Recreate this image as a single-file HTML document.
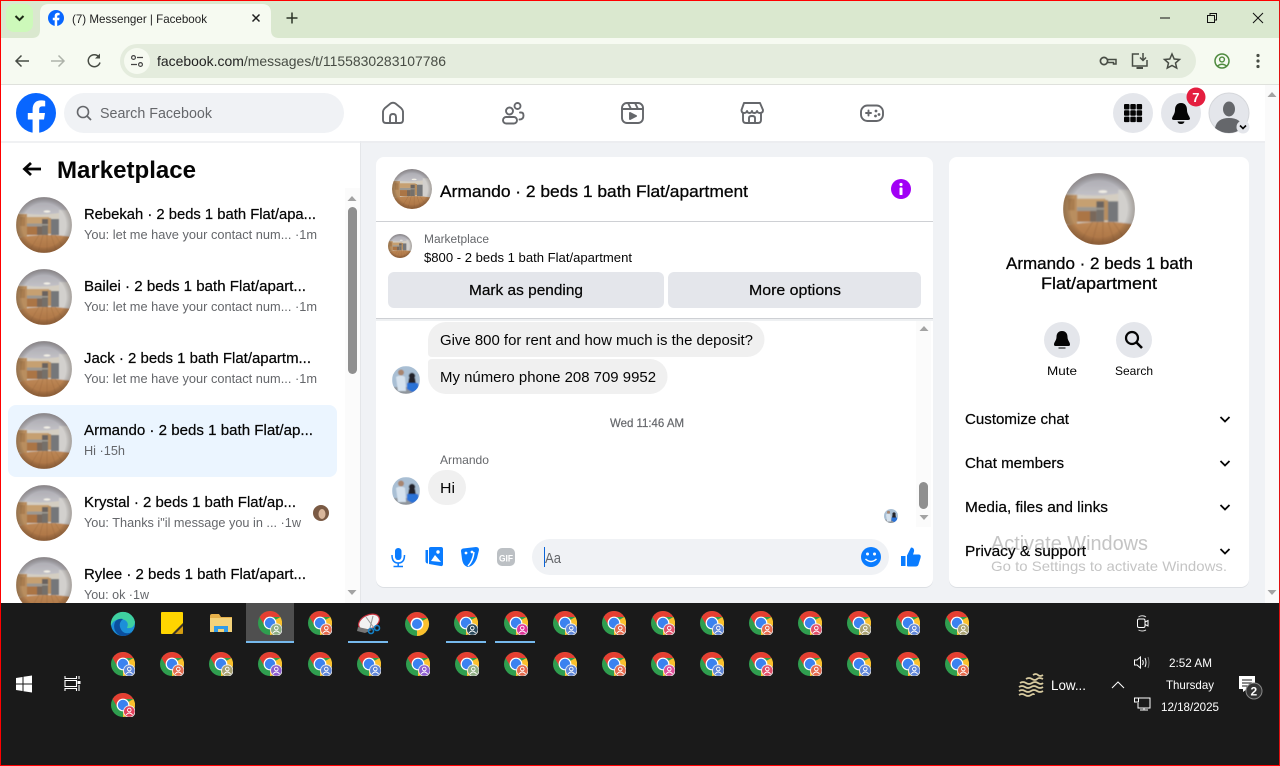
<!DOCTYPE html>
<html lang="en"><head><meta charset="utf-8"><title>(7) Messenger | Facebook</title>
<style>
html,body{margin:0;padding:0;background:#f0f2f5;overflow:hidden}
svg{display:block}
text{font-family:"Liberation Sans",sans-serif;white-space:pre}
.t{font-size:15px;fill:#050505;stroke:#050505;stroke-width:.22}
.s{font-size:13px;fill:#65676b}
.n{font-size:15px;fill:#050505}
.w{fill:#fff;font-size:12px}
</style></head><body>
<svg xmlns="http://www.w3.org/2000/svg" width="1280" height="766" viewBox="0 0 1280 766">
<defs>
<clipPath id="rc"><circle cx="28" cy="28" r="28"/></clipPath>
<clipPath id="pc"><circle cx="14" cy="14" r="14"/></clipPath>
<filter id="bl" x="-5%" y="-5%" width="110%" height="110%"><feGaussianBlur stdDeviation=".55"/></filter>
<filter id="bp" x="-5%" y="-5%" width="110%" height="110%"><feGaussianBlur stdDeviation=".5"/></filter>
<radialGradient id="vg" cx=".5" cy=".5" r=".5"><stop offset=".78" stop-color="#000" stop-opacity="0"/><stop offset="1" stop-color="#3a2a20" stop-opacity=".28"/></radialGradient>
<linearGradient id="ce" x1="0" y1="0" x2="0" y2="1"><stop offset="0" stop-color="#a6a5ac"/><stop offset=".35" stop-color="#c6c5ca"/></linearGradient>
<linearGradient id="fl" x1="0" y1="0" x2="0" y2="1"><stop offset="0" stop-color="#bd8856"/><stop offset="1" stop-color="#a86f40"/></linearGradient>
<symbol id="room" viewBox="0 0 56 56">
<g clip-path="url(#rc)"><g filter="url(#bl)">
<rect width="56" height="56" fill="url(#ce)"/>
<path d="M0 15 Q28 21 56 13 V40 H0Z" fill="#d4cec2"/>
<ellipse cx="31" cy="14.500" rx="3.500" ry="1.100" fill="#f2efe6"/>
<rect x="0" y="17" width="11" height="23" fill="#b98e5f"/>
<rect x="4" y="20" width="5" height="9" fill="#a97d50"/>
<rect x="11" y="20" width="22" height="6.500" fill="#c6a071"/>
<rect x="11" y="26.500" width="26" height="3" fill="#9c9890"/>
<rect x="11" y="29.500" width="10" height="8.500" fill="#ab7444"/>
<rect x="21" y="29.500" width="5" height="8.500" fill="#79685a"/>
<rect x="26" y="22" width="6" height="5" fill="#6a645f"/>
<rect x="26" y="28.500" width="6" height="9.500" fill="#75706b"/>
<rect x="32" y="21" width="3" height="16" fill="#b78f61"/>
<rect x="35" y="22" width="8" height="16" fill="#75777a"/>
<rect x="43" y="13" width="13" height="27" fill="#d2d0cd"/>
<path d="M0 41 Q28 35.500 56 40 V56 H0Z" fill="url(#fl)"/>
<path d="M12 56 L23 38M22 56 L27 38M31 56 L31 38M41 56 L35 38M51 56 L39 38" stroke="#93623a" stroke-width=".5" opacity=".7"/>
</g>
<circle cx="28" cy="28" r="28" fill="url(#vg)"/>
</g></symbol>
<symbol id="per" viewBox="0 0 28 28">
<g clip-path="url(#pc)"><g filter="url(#bp)">
<rect width="28" height="28" fill="#a9bfd4"/>
<rect y="21" width="28" height="7" fill="#8f959c"/>
<circle cx="9" cy="6.500" r="3" fill="#a88670"/>
<path d="M4 11 Q9 8 13 11 L14 25 H6Z" fill="#d5e2ee"/>
<circle cx="20" cy="10" r="3.200" fill="#22222a"/>
<path d="M17 12 H23 L24 18 H16Z" fill="#22222a"/>
<path d="M15 17 H26 L27 24 L20 26 L15 23Z" fill="#2a72d6"/>
</g></g></symbol>
<symbol id="c" viewBox="0 0 24 24">
<circle cx="12" cy="12" r="12" fill="#2f9e4f"/>
<path d="M12 12 L22.4 6 A12 12 0 0 1 12 24Z" fill="#fbc02d"/>
<path d="M1.6 6 A12 12 0 0 1 22.4 6 H12 L6.8 15Z" fill="#e53f32"/>
<circle cx="12" cy="12" r="6.400" fill="#fff"/>
<circle cx="12" cy="12" r="5.200" fill="#3b82f0"/>
<circle cx="18.300" cy="18.500" r="6.200" fill="#f2f2f2" opacity=".9"/>
<circle cx="18.300" cy="18.500" r="5.300" fill="currentColor"/>
<circle cx="18.300" cy="17" r="1.800" fill="none" stroke="#fff" stroke-width=".9"/>
<path d="M15 22 Q18.300 18 21.600 22" fill="none" stroke="#fff" stroke-width=".9"/>
</symbol>
</defs>

<!-- browser chrome -->
<rect width="1280" height="38" fill="#dae8cf"/>
<rect y="38" width="1280" height="46" fill="#f6faf1"/>
<rect y="84" width="1280" height="1" fill="#dfe1dc"/>
<rect x="6" y="4" width="27" height="28" rx="8" fill="#cdf9ba"/>
<path d="M15.500 16 L19.500 20 L23.500 16" fill="none" stroke="#1c2b16" stroke-width="2"/>
<path d="M32 38 Q40 38 40 30 V13 Q40 4 49 4 H262 Q271 4 271 13 V30 Q271 38 279 38Z" fill="#f6faf1"/>
<circle cx="56" cy="18" r="8" fill="#0866ff"/>
<path d="M54.700 26 V20.300 H52.800 V17.800 H54.700 V16.300 C54.700 13.800 56 12.800 58 12.800 L59.600 13 V15.200 H58.500 C57.500 15.200 57.200 15.700 57.200 16.600 V17.800 H59.500 L59.100 20.300 H57.200 V26Z" fill="#fff"/>
<text x="72" y="23" font-size="12" fill="#1f1f1f" textLength="135" lengthAdjust="spacingAndGlyphs">(7) Messenger | Facebook</text>
<path d="M252.500 14.500 L259.500 21.500 M259.500 14.500 L252.500 21.500" stroke="#1f1f1f" stroke-width="1.500"/>
<path d="M292 12.500 V23.500 M286.500 18 H297.500" stroke="#2a3326" stroke-width="1.500"/>
<path d="M1160 18 H1170" stroke="#111" stroke-width="1"/>
<path d="M1207.500 15.500 H1214.500 V22.500 H1207.500Z M1210 15.500 V13.500 H1216.500 V20 H1214.500" fill="none" stroke="#111" stroke-width="1"/>
<path d="M1253 13 L1263 23 M1263 13 L1253 23" stroke="#111" stroke-width="1"/>
<!-- toolbar -->
<path d="M29 61 H16.500 M21.500 55.500 L16 61 L21.500 66.500" fill="none" stroke="#474c44" stroke-width="1.500"/>
<path d="M51 61 H63.500 M58.500 55.500 L64 61 L58.500 66.500" fill="none" stroke="#aeb3aa" stroke-width="1.500"/>
<path d="M99 57 A6 6 0 1 0 100 62.500" fill="none" stroke="#474c44" stroke-width="1.500"/>
<path d="M100 53.500 V58.500 H95Z" fill="#474c44"/>
<rect x="120" y="44" width="1076" height="34" rx="17" fill="#e4ecdd"/>
<circle cx="137" cy="61" r="13" fill="#f6faf1"/>
<circle cx="133.500" cy="57.500" r="1.900" fill="none" stroke="#444" stroke-width="1.200"/>
<path d="M137 57.500 H143 M131 64.500 H137" stroke="#444" stroke-width="1.300"/>
<circle cx="140.500" cy="64.500" r="1.900" fill="none" stroke="#444" stroke-width="1.200"/>
<text x="157" y="66" font-size="14" fill="#1f1f1f" textLength="289" lengthAdjust="spacingAndGlyphs">facebook.com<tspan fill="#474c44">/messages/t/1155830283107786</tspan></text>
<circle cx="1104" cy="61" r="3.600" fill="none" stroke="#474c44" stroke-width="1.700"/>
<path d="M1107.500 59.500 H1116 V64 H1113.500 V62.500 H1107.500" fill="none" stroke="#474c44" stroke-width="1.500"/>
<path d="M1139 54 H1132.500 V66 H1147 V60" fill="none" stroke="#474c44" stroke-width="1.500"/>
<path d="M1136.500 68 H1143" stroke="#474c44" stroke-width="2"/>
<path d="M1143 53 V60 M1140 57.500 L1143 60.500 L1146 57.500" fill="none" stroke="#474c44" stroke-width="1.500"/>
<path d="M1172 54 L1174.200 59 L1179.500 59.500 L1175.500 63 L1176.700 68 L1172 65.500 L1167.300 68 L1168.500 63 L1164.500 59.500 L1169.800 59Z" fill="none" stroke="#474c44" stroke-width="1.500"/>
<circle cx="1222" cy="61" r="7" fill="none" stroke="#4e8a3e" stroke-width="1.500"/>
<circle cx="1222" cy="59.500" r="2.400" fill="none" stroke="#4e8a3e" stroke-width="1.400"/>
<path d="M1217.500 66 Q1222 62.500 1226.500 66" fill="none" stroke="#4e8a3e" stroke-width="1.400"/>
<circle cx="1258" cy="55.500" r="1.600" fill="#474c44"/><circle cx="1258" cy="61" r="1.600" fill="#474c44"/><circle cx="1258" cy="66.500" r="1.600" fill="#474c44"/>

<!-- page background -->
<rect y="85" width="1280" height="518" fill="#f0f2f5"/>
<rect x="1" y="141" width="359" height="462" fill="#fff"/>
<rect x="360" y="141" width="1" height="462" fill="#e4e6e9"/>
<rect x="345" y="188" width="15" height="415" fill="#fbfbfb"/>
<rect x="1265" y="85" width="15" height="518" fill="#fafafa"/>
<path d="M1267.500 97 L1272 92 L1276.500 97Z M1267.500 590 L1272 595 L1276.500 590Z" fill="#a3a3a3"/>
<!-- top bar -->
<rect y="85" width="1265" height="56" fill="#fff"/>
<rect y="141" width="1265" height="2" fill="#e9ebee" opacity=".7"/>
<circle cx="36" cy="113" r="20" fill="#0866ff"/>
<path d="M32.600 133 V119.500 H27.800 V113 H32.600 V109.600 C32.600 103.500 35.800 100.400 41 100.400 C42.400 100.400 44.200 100.600 45.200 100.900 V106.400 H42.600 C40.200 106.400 39.200 107.400 39.200 109.600 V113 H45 L44 119.500 H39.200 V133Z" fill="#fff"/>
<rect x="64" y="93" width="280" height="40" rx="20" fill="#f0f2f5"/>
<circle cx="83" cy="112" r="5.500" fill="none" stroke="#65676b" stroke-width="1.600"/>
<path d="M87 116 L91 120" stroke="#65676b" stroke-width="1.800"/>
<text x="100" y="118" font-size="15" fill="#65676b" textLength="112" lengthAdjust="spacingAndGlyphs">Search Facebook</text>
<g fill="none" stroke="#65676b" stroke-width="1.900" stroke-linejoin="round" stroke-linecap="round">
<path d="M383 112 C383 110 384 109 385 108 L390.500 103.500 Q393 102 395.500 103.500 L401 108 C402 109 403 110 403 112 V120 Q403 123 400 123 H386 Q383 123 383 120Z"/>
<path d="M390 123 V117 Q390 114 393 114 Q396 114 396 117 V123"/>
<circle cx="509.500" cy="111" r="3.500"/><circle cx="517.500" cy="106" r="3"/>
<rect x="503" y="117" width="14" height="6.500" rx="3.200"/>
<path d="M520 112.500 H521 Q523.500 112.500 523.500 115.500 Q523.500 119.500 519.500 119.500"/>
<rect x="622" y="103" width="21" height="20" rx="5"/>
<path d="M622 109 H643 M628 103 L631 109 M635 103 L638 109"/>
<path d="M630 113 V119 L636 116Z" fill="#65676b"/>
<path d="M744 103 H760 L763 110 Q763 113 760 113 Q757.500 113 757 111 Q756.500 113 754.500 113 Q752 113 752 111 Q751.500 113 749.500 113 Q747.500 113 747 111 Q746.500 113 744 113 Q741.500 113 741.500 110Z"/>
<path d="M743 113 V120 Q743 123 746 123 H758 Q761 123 761 120 V113"/>
<path d="M749 123 V118 Q749 116 752 116 Q755 116 755 118 V123"/>
<rect x="861" y="105.500" width="22" height="15.500" rx="6.500"/>
<path d="M866 113 H871 M868.500 110.500 V115.500"/>
</g>
<circle cx="876" cy="111" r="1.400" fill="#65676b"/><circle cx="879" cy="114.500" r="1.400" fill="#65676b"/><circle cx="875.500" cy="116" r="1.400" fill="#65676b"/>
<circle cx="1133" cy="113" r="20" fill="#e4e6eb"/><circle cx="1181" cy="113" r="20" fill="#e4e6eb"/><circle cx="1229" cy="113" r="20" fill="#e4e6eb" stroke="#d5d7db"/>
<g fill="#050505">
<rect x="1124" y="104" width="5.500" height="5.500" rx="1"/><rect x="1130.300" y="104" width="5.500" height="5.500" rx="1"/><rect x="1136.600" y="104" width="5.500" height="5.500" rx="1"/>
<rect x="1124" y="110.300" width="5.500" height="5.500" rx="1"/><rect x="1130.300" y="110.300" width="5.500" height="5.500" rx="1"/><rect x="1136.600" y="110.300" width="5.500" height="5.500" rx="1"/>
<rect x="1124" y="116.600" width="5.500" height="5.500" rx="1"/><rect x="1130.300" y="116.600" width="5.500" height="5.500" rx="1"/><rect x="1136.600" y="116.600" width="5.500" height="5.500" rx="1"/>
<path d="M1181 103 C1185.500 103 1187 106.500 1187 110 C1187 114 1189.500 116 1190 118.500 Q1190 120 1188 120 H1174 Q1172 120 1172 118.500 C1172.500 116 1175 114 1175 110 C1175 106.500 1176.500 103 1181 103Z"/>
<path d="M1177.500 121.500 H1184.500 Q1184 124 1181 124 Q1178 124 1177.500 121.500Z"/>
</g>
<circle cx="1196" cy="97" r="9.500" fill="#e41e3f"/>
<text x="1192.200" y="102" font-size="13" font-weight="700" fill="#fff">7</text>
<ellipse cx="1229" cy="109" rx="6" ry="7.500" fill="#65676b"/>
<path d="M1215 128 Q1217 118 1229 118 Q1241 118 1243 128 Q1236 133 1229 133 Q1221 133 1215 128Z" fill="#65676b"/>
<circle cx="1243" cy="127" r="6.500" fill="#e4e6eb"/>
<path d="M1240 125.500 L1243 128.500 L1246 125.500" fill="none" stroke="#050505" stroke-width="1.600"/>

<!-- left column -->
<path d="M41 169 H25 M31 163 L24.500 169 L31 175" fill="none" stroke="#050505" stroke-width="2.800"/>
<text x="57" y="178" font-size="24" font-weight="700" fill="#050505" textLength="139" lengthAdjust="spacingAndGlyphs">Marketplace</text>
<rect x="8" y="405" width="329" height="72" rx="8" fill="#ebf5ff"/>
<path d="M347.500 201 L352 196 L356.500 201Z M347.500 590 L352 595 L356.500 590Z" fill="#a3a3a3"/>
<rect x="348" y="207" width="9" height="167" rx="4.500" fill="#8f8f8f"/>
<use href="#room" x="16" y="197" width="56" height="56"/>
<use href="#room" x="16" y="269" width="56" height="56"/>
<use href="#room" x="16" y="341" width="56" height="56"/>
<use href="#room" x="16" y="413" width="56" height="56"/>
<use href="#room" x="16" y="485" width="56" height="56"/>
<use href="#room" x="16" y="557" width="56" height="56"/>
<text class="t" x="84" y="219" textLength="232" lengthAdjust="spacingAndGlyphs">Rebekah · 2 beds 1 bath Flat/apa...</text>
<text class="s" x="84" y="239" textLength="233" lengthAdjust="spacingAndGlyphs">You: let me have your contact num... ·1m</text>
<text class="t" x="84" y="291" textLength="222" lengthAdjust="spacingAndGlyphs">Bailei · 2 beds 1 bath Flat/apart...</text>
<text class="s" x="84" y="311" textLength="233" lengthAdjust="spacingAndGlyphs">You: let me have your contact num... ·1m</text>
<text class="t" x="84" y="363" textLength="227" lengthAdjust="spacingAndGlyphs">Jack · 2 beds 1 bath Flat/apartm...</text>
<text class="s" x="84" y="383" textLength="233" lengthAdjust="spacingAndGlyphs">You: let me have your contact num... ·1m</text>
<text class="t" x="84" y="435" textLength="229" lengthAdjust="spacingAndGlyphs">Armando · 2 beds 1 bath Flat/ap...</text>
<text class="s" x="84" y="455" textLength="41" lengthAdjust="spacingAndGlyphs">Hi ·15h</text>
<text class="t" x="84" y="507" textLength="212" lengthAdjust="spacingAndGlyphs">Krystal · 2 beds 1 bath Flat/ap...</text>
<text class="s" x="84" y="527" textLength="217" lengthAdjust="spacingAndGlyphs">You: Thanks i"il message you in ... ·1w</text>
<circle cx="321" cy="513" r="8" fill="#7a5a44"/><ellipse cx="322" cy="514" rx="3.500" ry="5" fill="#d9b79c"/>
<text class="t" x="84" y="579" textLength="222" lengthAdjust="spacingAndGlyphs">Rylee · 2 beds 1 bath Flat/apart...</text>
<text class="s" x="84" y="599" textLength="65" lengthAdjust="spacingAndGlyphs">You: ok ·1w</text>

<!-- chat panel -->
<rect x="376" y="158" width="557" height="430" rx="8" fill="#dcdfe3"/>
<rect x="376" y="157" width="557" height="430" rx="8" fill="#fff"/>
<use href="#room" x="392" y="169" width="40" height="40"/>
<text x="440" y="197" font-size="17" fill="#050505" stroke="#050505" stroke-width=".3" textLength="308" lengthAdjust="spacingAndGlyphs">Armando · 2 beds 1 bath Flat/apartment</text>
<circle cx="901" cy="189" r="10" fill="#a100f5"/>
<circle cx="901" cy="184.500" r="1.600" fill="#fff"/><rect x="899.500" y="187.500" width="3" height="7.500" rx=".8" fill="#fff"/>
<rect x="376" y="221" width="557" height="1" fill="#ced0d4"/>
<use href="#room" x="388" y="234" width="24" height="24"/>
<text x="424" y="243" font-size="11.500" fill="#65676b" textLength="65" lengthAdjust="spacingAndGlyphs">Marketplace</text>
<text x="424" y="262" font-size="12.500" fill="#050505" textLength="208" lengthAdjust="spacingAndGlyphs">$800 - 2 beds 1 bath Flat/apartment</text>
<rect x="388" y="272" width="276" height="36" rx="6" fill="#e4e6eb"/>
<rect x="668" y="272" width="253" height="36" rx="6" fill="#e4e6eb"/>
<text class="t" x="469" y="295" textLength="114" lengthAdjust="spacingAndGlyphs">Mark as pending</text>
<text class="t" x="749" y="295" textLength="92" lengthAdjust="spacingAndGlyphs">More options</text>
<rect x="376" y="318" width="557" height="1" fill="#ced0d4"/>
<rect x="376" y="319" width="557" height="2" fill="#eef0f2"/>
<rect x="916" y="321" width="15" height="206" fill="#fbfbfb"/>
<path d="M919.500 331 L924 326 L928.500 331Z M919.500 515 L924 520 L928.500 515Z" fill="#a3a3a3"/>
<rect x="919" y="482" width="9" height="27" rx="4.500" fill="#8f8f8f"/>
<path d="M446 322 H747 A17.500 17.500 0 0 1 747 357 H432 Q428 357 428 353 V340 A18 18 0 0 1 446 322Z" fill="#f0f0f0"/>
<text class="n" x="440" y="345" textLength="313" lengthAdjust="spacingAndGlyphs">Give 800 for rent and how much is the deposit?</text>
<path d="M432 359 H650 A17.500 17.500 0 0 1 650 394 H446 A18 18 0 0 1 428 376 V363 Q428 359 432 359Z" fill="#f0f0f0"/>
<text class="n" x="440" y="382" textLength="216" lengthAdjust="spacingAndGlyphs">My número phone 208 709 9952</text>
<use href="#per" x="392" y="366" width="28" height="28"/>
<text x="610" y="427" font-size="12" fill="#65676b" stroke="#65676b" stroke-width=".2" textLength="74" lengthAdjust="spacingAndGlyphs">Wed 11:46 AM</text>
<text x="440" y="464" font-size="12" fill="#65676b" textLength="49" lengthAdjust="spacingAndGlyphs">Armando</text>
<rect x="428" y="470" width="38" height="35" rx="17.500" fill="#f0f0f0"/>
<text class="n" x="440" y="493" textLength="15" lengthAdjust="spacingAndGlyphs">Hi</text>
<use href="#per" x="392" y="477" width="28" height="28"/>
<use href="#per" x="884" y="509" width="14" height="14"/>
<!-- composer -->
<g fill="#0a7cff">
<rect x="395" y="548" width="6.500" height="12" rx="3.200"/>
<path d="M392 555 Q392 563 398.200 563 Q404.500 563 404.500 555" fill="none" stroke="#0a7cff" stroke-width="1.500"/>
<path d="M398.200 563 V566 M393.500 566.500 H403" stroke="#0a7cff" stroke-width="1.500"/>
<path d="M429 548.500 Q429 547 431 547 H441 Q443 547 443 549 V564 Q443 566.500 440.500 566 L429 564Z"/>
<path d="M425.500 550 V561 Q425.500 563.500 428 563.500 V550Z"/>
<circle cx="438" cy="552" r="1.700" fill="#fff"/>
<path d="M431 561 L435 555 L441 562Z" fill="#fff"/>
<path d="M461 551 Q461 549 463 548.500 L476 547 Q479 547 479 550 L477 558 Q474 566 468 567 Q463 566 462 559Z"/>
<path d="M474 552 Q473 561 468 566" fill="none" stroke="#fff" stroke-width="1.500"/>
<circle cx="466" cy="553" r="1.400" fill="#fff"/><circle cx="472" cy="552" r="1.400" fill="#fff"/>
<path d="M905.500 566 H901 V556 H905.500Z M907 566 V555.500 L911 547.500 Q914.500 547.500 914 551.500 L913 554.500 H919 Q921.500 555 920.500 558 L918.500 564.500 Q918 566.500 915.500 566.500 H908Z"/>
</g>
<rect x="497" y="548" width="18" height="18" rx="5" fill="#bcc0c4"/>
<text x="499" y="561.500" font-size="9" font-weight="700" fill="#fff" textLength="14" lengthAdjust="spacingAndGlyphs">GIF</text>
<rect x="532" y="539" width="357" height="36" rx="18" fill="#f0f2f5"/>
<circle cx="871" cy="557" r="10" fill="#0a7cff"/>
<circle cx="867.500" cy="554" r="1.500" fill="#fff"/><circle cx="874.500" cy="554" r="1.500" fill="#fff"/>
<path d="M865.500 559 Q871 564 876.500 559" fill="none" stroke="#fff" stroke-width="1.500"/>
<rect x="544" y="547" width="1" height="20" fill="#0a64d8"/>
<text x="545" y="563" font-size="15" fill="#65676b" textLength="16" lengthAdjust="spacingAndGlyphs">Aa</text>

<!-- right panel -->
<rect x="949" y="158" width="300" height="430" rx="8" fill="#dcdfe3"/>
<rect x="949" y="157" width="300" height="430" rx="8" fill="#fff"/>
<use href="#room" x="1063" y="173" width="72" height="72"/>
<text x="1006" y="269" font-size="17" fill="#050505" stroke="#050505" stroke-width=".3" textLength="187" lengthAdjust="spacingAndGlyphs">Armando · 2 beds 1 bath</text>
<text x="1041" y="289" font-size="17" fill="#050505" stroke="#050505" stroke-width=".3" textLength="116" lengthAdjust="spacingAndGlyphs">Flat/apartment</text>
<circle cx="1062" cy="340" r="18" fill="#e4e6eb"/><circle cx="1134" cy="340" r="18" fill="#e4e6eb"/>
<path d="M1062 331 C1066 331 1067.500 334 1067.500 337 C1067.500 340.500 1070 342 1070 344.500 Q1070 346 1068.500 346 H1055.500 Q1054 346 1054 344.500 C1054 342 1056.500 340.500 1056.500 337 C1056.500 334 1058 331 1062 331Z M1058.500 347.500 H1065.500 V348.500 H1058.500Z" fill="#050505"/>
<circle cx="1132" cy="338" r="6" fill="none" stroke="#050505" stroke-width="2.200"/>
<path d="M1136.500 342.500 L1142 348" stroke="#050505" stroke-width="2.600"/>
<text x="1047" y="375" font-size="12" fill="#050505" textLength="30" lengthAdjust="spacingAndGlyphs">Mute</text>
<text x="1115" y="375" font-size="12" fill="#050505" textLength="38" lengthAdjust="spacingAndGlyphs">Search</text>
<text class="t" x="965" y="424" textLength="104" lengthAdjust="spacingAndGlyphs">Customize chat</text>
<text class="t" x="965" y="468" textLength="99" lengthAdjust="spacingAndGlyphs">Chat members</text>
<text class="t" x="965" y="512" textLength="143" lengthAdjust="spacingAndGlyphs">Media, files and links</text>
<text class="t" x="965" y="556" textLength="121" lengthAdjust="spacingAndGlyphs">Privacy &amp; support</text>
<path d="M1220.500 417 L1225 421.500 L1229.500 417 M1220.500 461 L1225 465.500 L1229.500 461 M1220.500 505 L1225 509.500 L1229.500 505 M1220.500 549 L1225 553.500 L1229.500 549" fill="none" stroke="#050505" stroke-width="1.800"/>
<text x="991" y="550" font-size="20" fill="#8a8a8a" fill-opacity=".5" textLength="157" lengthAdjust="spacingAndGlyphs">Activate Windows</text>
<text x="991" y="571" font-size="14" fill="#8a8a8a" fill-opacity=".5" textLength="236" lengthAdjust="spacingAndGlyphs">Go to Settings to activate Windows.</text>

<!-- taskbar -->
<rect y="603" width="1280" height="163" fill="#1a1a1a"/>
<rect x="246" y="603" width="48" height="40" fill="#4f4f4f"/>
<rect x="246" y="641" width="48" height="2" fill="#76b9ed"/>
<rect x="348" y="641" width="40" height="2" fill="#76b9ed"/>
<rect x="446" y="641" width="40" height="2" fill="#76b9ed"/>
<rect x="495" y="641" width="40" height="2" fill="#76b9ed"/>
<path d="M16 678 L22.500 677 V683.500 H16Z M23.500 676.800 L32 675.500 V683.500 H23.500Z M16 684.500 H22.500 V691 L16 690Z M23.500 684.500 H32 V692.500 L23.500 691.200Z" fill="#fff"/>
<path d="M65 676 V678.500 H76.500 V676 M65 691 V688.500 H76.500 V691 M65 680.500 H76.500 V686.500 H65Z M79 676 V679 M79 685 V691" fill="none" stroke="#fff" stroke-width="1.100"/>
<rect x="77.500" y="681" width="3" height="3" fill="#fff"/>
<!-- edge -->
<circle cx="123" cy="624" r="12" fill="#1c8fd8"/>
<path d="M111 626 A12 12 0 0 1 135 622 Q134 629 127 628 Q130 621 122 619 Q113 619 111 626Z" fill="#3fd0a0"/>
<path d="M119 635 Q112 630 115 622 Q118 618 123 619 Q117 624 122 631 Q126 635 132 632 Q126 638 119 635Z" fill="#0b4f9e"/>
<!-- sticky -->
<rect x="161" y="612" width="22" height="22" rx="1" fill="#ffd500"/>
<path d="M172 634 L183 623 V632 Q183 634 181 634Z" fill="#3a3428"/><path d="M175 634 L183 626 V632 Q183 634 181 634Z" fill="#d69e10"/>
<!-- explorer -->
<path d="M210 616 Q210 614 212 614 H219 L221 617 H232 V632 H210Z" fill="#e6b04a"/>
<rect x="210" y="618" width="22" height="14" fill="#f3d27a"/>
<path d="M214 632 V626 H228 V632 H224 V629 H218 V632Z" fill="#2f9be8"/>
<!-- chrome row 1 -->
<use href="#c" x="258" y="611" width="24" height="24" color="#8fae84"/>
<use href="#c" x="308" y="611" width="24" height="24" color="#e56a4d"/>
<!-- snip -->
<ellipse cx="369" cy="622" rx="11" ry="7" transform="rotate(-25 369 622)" fill="#f2f2f2" stroke="#c7323e" stroke-width="1.200"/>
<path d="M358 627 L372 630 L365 633 L357 631Z" fill="#777"/>
<path d="M366 617 L374 628 M373 616 L370 628" stroke="#999" stroke-width="1"/>
<circle cx="371" cy="631" r="2.500" fill="none" stroke="#1482c8" stroke-width="1.600"/><circle cx="377" cy="628" r="2.500" fill="none" stroke="#1482c8" stroke-width="1.600"/>
<circle cx="417" cy="624" r="12" fill="#2f9e4f"/>
<path d="M417 624 L427.400 618 A12 12 0 0 1 417 636Z" fill="#fbc02d"/>
<path d="M406.600 618 A12 12 0 0 1 427.400 618 H417 L411.800 627Z" fill="#e53f32"/>
<circle cx="417" cy="624" r="6.400" fill="#fff"/><circle cx="417" cy="624" r="5" fill="#3b82f0"/>
<use href="#c" x="454" y="611" width="24" height="24" color="#2c4a5c"/>
<use href="#c" x="504" y="611" width="24" height="24" color="#e0359a"/>
<use href="#c" x="553" y="611" width="24" height="24" color="#5f86d8"/>
<use href="#c" x="602" y="611" width="24" height="24" color="#e56a4d"/>
<use href="#c" x="651" y="611" width="24" height="24" color="#e2506a"/>
<use href="#c" x="700" y="611" width="24" height="24" color="#5f86d8"/>
<use href="#c" x="749" y="611" width="24" height="24" color="#e56a4d"/>
<use href="#c" x="798" y="611" width="24" height="24" color="#e2506a"/>
<use href="#c" x="847" y="611" width="24" height="24" color="#a9a272"/>
<use href="#c" x="896" y="611" width="24" height="24" color="#5f86d8"/>
<use href="#c" x="945" y="611" width="24" height="24" color="#a9a272"/>
<!-- row 2 -->
<use href="#c" x="111" y="652" width="24" height="24" color="#5f86d8"/>
<use href="#c" x="160" y="652" width="24" height="24" color="#e56a4d"/>
<use href="#c" x="209" y="652" width="24" height="24" color="#a9a272"/>
<use href="#c" x="258" y="652" width="24" height="24" color="#8e5fd0"/>
<use href="#c" x="308" y="652" width="24" height="24" color="#5f86d8"/>
<use href="#c" x="357" y="652" width="24" height="24" color="#5f86d8"/>
<use href="#c" x="406" y="652" width="24" height="24" color="#8e5fd0"/>
<use href="#c" x="455" y="652" width="24" height="24" color="#8fae84"/>
<use href="#c" x="504" y="652" width="24" height="24" color="#e56a4d"/>
<use href="#c" x="553" y="652" width="24" height="24" color="#5f86d8"/>
<use href="#c" x="602" y="652" width="24" height="24" color="#e56a4d"/>
<use href="#c" x="651" y="652" width="24" height="24" color="#e0509a"/>
<use href="#c" x="700" y="652" width="24" height="24" color="#5f86d8"/>
<use href="#c" x="749" y="652" width="24" height="24" color="#e2506a"/>
<use href="#c" x="798" y="652" width="24" height="24" color="#e56a4d"/>
<use href="#c" x="847" y="652" width="24" height="24" color="#5f86d8"/>
<use href="#c" x="896" y="652" width="24" height="24" color="#5f86d8"/>
<use href="#c" x="945" y="652" width="24" height="24" color="#e56a4d"/>
<use href="#c" x="111" y="693" width="24" height="24" color="#e2405a"/>
<!-- tray -->
<path d="M1138.500 617 Q1142 614.500 1146 617 M1138.500 630 Q1142 632 1146 630" fill="none" stroke="#ddd" stroke-width="1"/>
<path d="M1139 619 H1143.500 Q1145 619 1145 620.500 V626 Q1145 627.500 1143.500 627.500 H1139 Q1137.500 627.500 1137.500 626 V620.500 Q1137.500 619 1139 619Z M1145 622 L1148 620.500 V626 L1145 624.500" fill="none" stroke="#fff" stroke-width="1"/>
<path d="M1134.500 660 H1137 L1140.500 657 V668 L1137 665 H1134.500Z M1142.500 660 Q1144 662.500 1142.500 665 M1145 658 Q1147 662.500 1145 667" fill="none" stroke="#fff" stroke-width="1"/>
<path d="M1148 657 Q1150 662.500 1148 668" fill="none" stroke="#777" stroke-width="1"/>
<path d="M1139 698 H1150 V708 H1138 V703 M1144 708 V710 M1140 710 H1148" fill="none" stroke="#fff" stroke-width="1"/>
<rect x="1134.500" y="698" width="4" height="4" fill="none" stroke="#fff" stroke-width="1"/>
<text class="w" x="1169" y="667" textLength="43" lengthAdjust="spacingAndGlyphs">2:52 AM</text>
<text class="w" x="1166" y="689" textLength="48" lengthAdjust="spacingAndGlyphs">Thursday</text>
<text class="w" x="1161" y="711" textLength="58" lengthAdjust="spacingAndGlyphs">12/18/2025</text>
<path d="M1112 688 L1118 682 L1124 688" fill="none" stroke="#fff" stroke-width="1"/>
<text x="1051" y="690" font-size="13.500" fill="#fff" textLength="35" lengthAdjust="spacingAndGlyphs">Low...</text>
<g fill="none" stroke="#d8cba0" stroke-width="1.800">
<path d="M1033 675 Q1036 673 1038 675 T1043 675"/>
<path d="M1026 679 Q1029 677 1032 679 T1037 679 T1043 679"/>
<path d="M1020 683 Q1023 681 1026 683 T1032 683 T1038 683 T1043 683"/>
<path d="M1019 687 Q1022 685 1025 687 T1031 687 T1037 687 T1043 687"/>
<path d="M1019 691 Q1022 689 1025 691 T1031 691 T1037 691 T1043 691"/>
<path d="M1019 695 Q1022 693 1025 695 T1031 695 T1034 695"/>
</g>
<path d="M1239 676 H1255 V689 H1247 L1243 692 V689 H1239Z" fill="#fff"/>
<path d="M1242 680 H1252 M1242 683 H1252 M1242 686 H1249" stroke="#1a1a1a" stroke-width="1"/>
<circle cx="1254" cy="691" r="8" fill="#333" stroke="#888" stroke-width="1"/>
<text x="1250.500" y="695.500" font-size="12" font-weight="700" fill="#fff">2</text>

<!-- red capture border -->
<rect x="0" y="0" width="1280" height="1" fill="#f00"/>
<rect x="0" y="0" width="1" height="766" fill="#f00"/>
<rect x="1279" y="0" width="1" height="766" fill="#e01010"/>
<rect x="0" y="765" width="1280" height="1" fill="#f00"/>
</svg>
</body></html>
